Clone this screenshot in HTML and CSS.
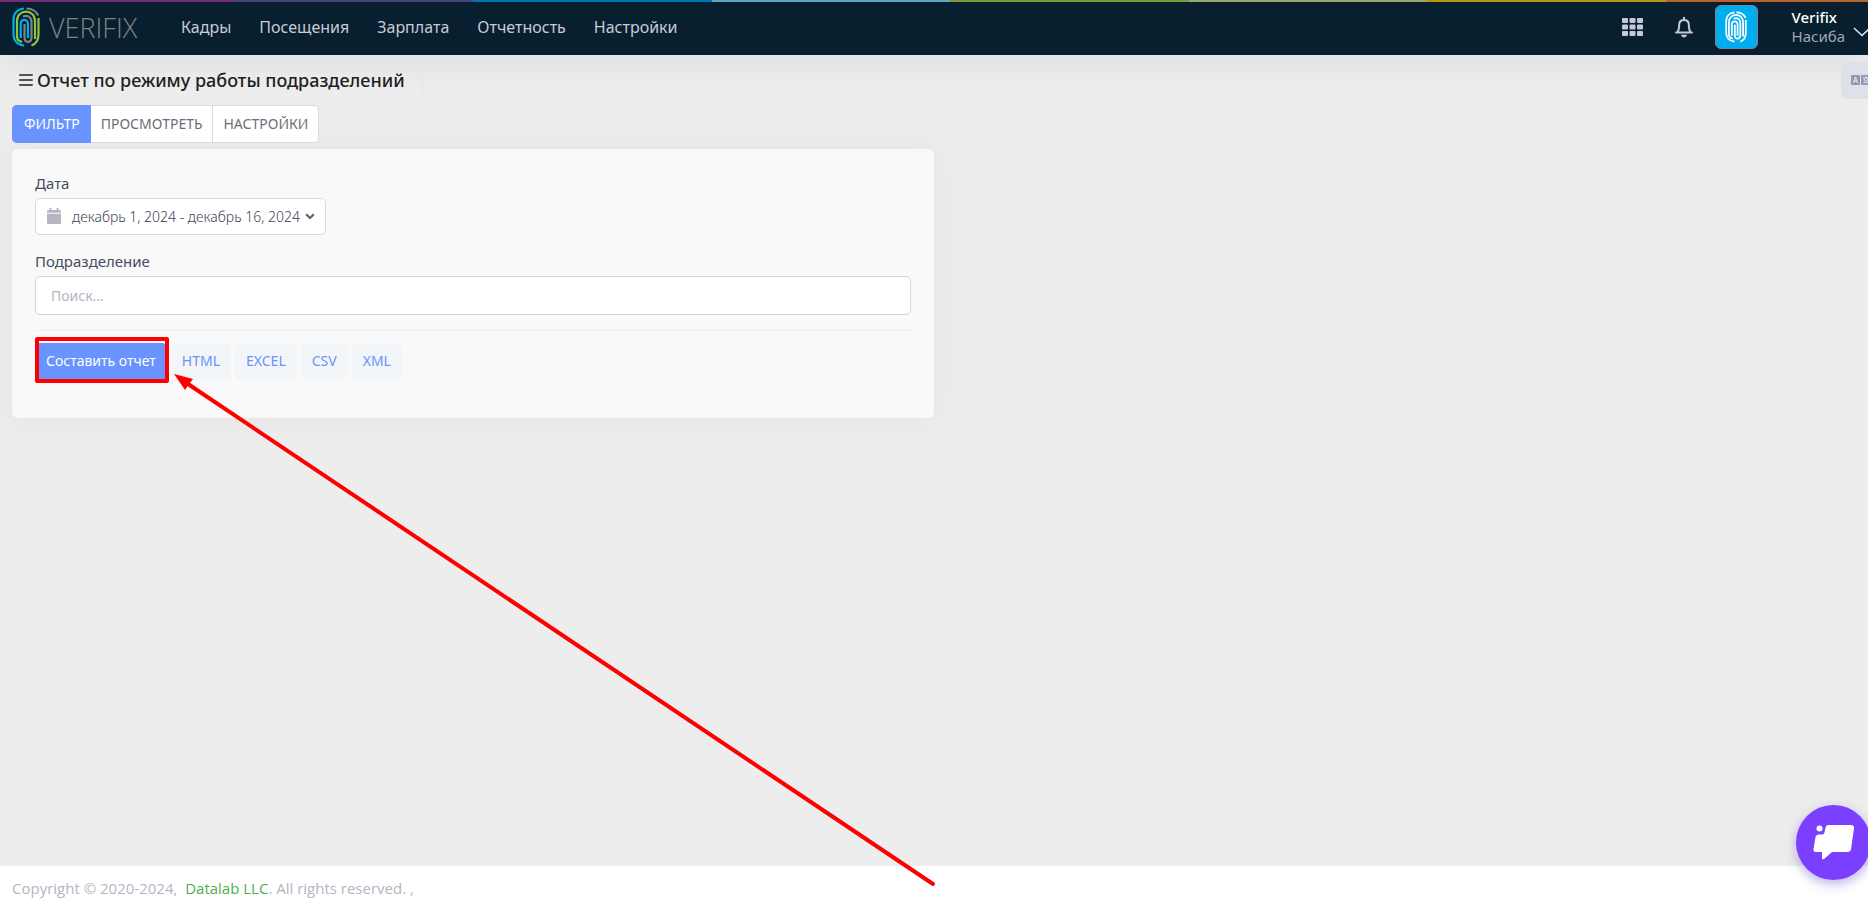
FILE: index.html
```html
<!DOCTYPE html>
<html lang="ru">
<head>
    <meta charset="UTF-8">
    <meta name="viewport" content="width=device-width, initial-scale=1.0">
    <title>Отчет по режиму работы подразделений</title>
    <link rel="stylesheet" href="styles.css">
</head>
<body>
    <!-- Logo shape shared by the header and the avatar -->
    <svg class="sprite" aria-hidden="true">
        <symbol id="finger" viewBox="0 0 28 40">
            <g fill="none" stroke-width="2.2">
                <path class="f-blue" d="M12 1.5C5 2 1.500 7 1.500 13V27C1.500 33 5 38 12 38.500"/>
                <path class="f-gray" d="M14.500 1.500C20 1.500 24 4 26.200 8.500"/>
                <path class="f-green" d="M5 31V14C5 1.500 23 1.500 23 14V32M26.500 11V27C26.500 33 24 37 19.500 38.500"/>
                <path class="f-green" d="M5 30C5.500 33 7.500 34.500 10 34.800"/>
                <path class="f-gray" d="M11 9.500C16 7.500 19.500 10.500 19.500 15V30C19.500 36.500 12.500 36.500 12.500 30V17"/>
                <path class="f-blue" d="M8.700 31V17C8.700 11.500 16 11.500 16 17V31"/>
            </g>
        </symbol>
    </svg>

    <header class="header">
        <div class="stripe">
            <i class="s1"></i><i class="s2"></i><i class="s3"></i><i class="s4"></i><i class="s5"></i><i class="s6"></i><i class="s7"></i><i class="s8"></i>
        </div>
        <div class="header-row">
            <a class="logo" href="#" aria-label="Verifix">
                <svg class="logo-mark"><use href="#finger"/></svg>
                <span class="logo-text">VERIFIX</span>
            </a>
            <nav class="menu">
                <a href="#">Кадры</a>
                <a href="#">Посещения</a>
                <a href="#">Зарплата</a>
                <a href="#">Отчетность</a>
                <a href="#">Настройки</a>
            </nav>
            <div class="topbar">
                <button class="icon-btn apps" aria-label="Apps">
                    <svg width="21" height="18" viewBox="0 0 21 18" fill="#c4c8d8">
                        <rect width="6" height="5" rx="1"/><rect x="7.500" width="6" height="5" rx="1"/><rect x="15" width="6" height="5" rx="1"/>
                        <rect y="6.500" width="6" height="5" rx="1"/><rect x="7.500" y="6.500" width="6" height="5" rx="1"/><rect x="15" y="6.500" width="6" height="5" rx="1"/>
                        <rect y="13" width="6" height="5" rx="1"/><rect x="7.500" y="13" width="6" height="5" rx="1"/><rect x="15" y="13" width="6" height="5" rx="1"/>
                    </svg>
                </button>
                <button class="icon-btn bell" aria-label="Notifications">
                    <svg width="18" height="21" viewBox="0 0 18 21">
                        <path d="M9 0.500V3M1 15.500H17M2.500 15C4.500 12.500 4 10 4.200 7.500C4.500 1.500 13.500 1.500 13.800 7.500C14 10 13.500 12.500 15.500 15" fill="none" stroke="#c4c8d8" stroke-width="2" stroke-linecap="round"/>
                        <path d="M6 17.800H12C11.500 21.500 6.500 21.500 6 17.800Z" fill="#c4c8d8"/>
                    </svg>
                </button>
                <button class="avatar" aria-label="Verifix">
                    <svg width="22" height="32"><use href="#finger"/></svg>
                </button>
                <div class="user">
                    <b>Verifix</b>
                    <span>Насиба</span>
                </div>
                <svg class="user-arrow" viewBox="0 0 18 10"><path d="M1 1L9 8.500L17 1" fill="none" stroke="#e4e6ef" stroke-width="1.500"/></svg>
            </div>
        </div>
    </header>

    <div class="subheader">
        <svg class="burger" viewBox="0 0 14 12"><path d="M1 1H13M1 6H13M1 11H13" stroke="#50514f" stroke-width="2" stroke-linecap="round"/></svg>
        <h1>Отчет по режиму работы подразделений</h1>
        <span class="separator"></span>
        <button class="lang-btn" aria-label="Language">
            <svg width="20" height="10" viewBox="0 0 20 10">
                <rect width="9" height="10" rx="1" fill="#9397b5"/><rect x="10" width="10" height="10" rx="1" fill="#9397b5"/>
                <path d="M2.500 8L4.500 2L6.500 8M3.200 6H5.800M12 3H18M15 1.500V3M13 4C14 6 16 7.500 17.500 8M17 4C16 6 14.500 7.500 12.500 8" fill="none" stroke="#f0f0f6"/>
            </svg>
        </button>
    </div>

    <main class="content">
        <div class="tabs">
            <button class="tab active">ФИЛЬТР</button>
            <button class="tab">ПРОСМОТРЕТЬ</button>
            <button class="tab">НАСТРОЙКИ</button>
        </div>

        <form class="card">
            <label for="date">Дата</label>
            <button class="date-btn" id="date" type="button">
                <svg width="14" height="16" viewBox="0 0 14 16" fill="#b5b5c3">
                    <path d="M2.500 0H4.500V2H9.500V0H11.500V2H12.500Q14 2 14 3.500V4.800H0V3.500Q0 2 1.500 2H2.500ZM0 5.800H14V14.500Q14 16 12.500 16H1.500Q0 16 0 14.500Z"/>
                </svg>
                <span>декабрь 1, 2024 - декабрь 16, 2024</span>
                <svg width="10" height="7" viewBox="0 0 10 7"><path d="M1.200 1.200L5 5L8.800 1.200" fill="none" stroke="#5e6278" stroke-width="2.200"/></svg>
            </button>

            <label for="division">Подразделение</label>
            <input class="search" id="division" type="text" placeholder="Поиск...">

            <div class="actions">
                <div class="marked">
                    <button class="btn primary" type="button">Составить отчет</button>
                    <svg class="arrow" viewBox="0 0 764 516">
                        <path d="M14 10L759 510" stroke="#f00" stroke-width="4" stroke-linecap="round"/>
                        <path d="M0 0L19 5L15 10L11 16Z" fill="#f00"/>
                    </svg>
                </div>
                <button class="btn" type="button">HTML</button>
                <button class="btn" type="button">EXCEL</button>
                <button class="btn" type="button">CSV</button>
                <button class="btn" type="button">XML</button>
            </div>
        </form>
    </main>

    <footer class="footer">Copyright © 2020-2024,&nbsp; <a href="#">Datalab LLC</a>. All rights reserved. ,</footer>

    <button class="chat" aria-label="Chat">
        <svg width="42" height="36" viewBox="0 0 42 36" fill="#fff">
            <circle cx="6.500" cy="3.500" r="3"/>
            <path d="M15 0H38Q41.500 0 41 3.500L38 24Q37.500 27 34.500 27H19L11 34Q9 35 9 33V27H3Q0 27 0.500 24L2.500 12Q3 9.500 5.500 9.500H9Q11 9.500 11.500 7.500L12.500 2.500Q13 0 15 0Z"/>
        </svg>
    </button>
</body>
</html>
```
FILE: styles.css
```css
* {
    margin: 0;
    padding: 0;
    box-sizing: border-box;
    font-family: 'Noto Sans', 'Open Sans', sans-serif;
}

body {
    display: flex;
    flex-direction: column;
    min-height: 100vh;
    background: #ededed;
    color: #464e5f;
    font-size: 15px;
    overflow-x: hidden;
}

a {
    text-decoration: none;
}

button {
    border: none;
    background: none;
    cursor: pointer;
}

svg {
    display: block;
    flex-shrink: 0;
}

.sprite {
    position: absolute;
    width: 0;
    height: 0;
}

/* Header */
.header {
    height: 55px;
    background: #071f2e;
    box-shadow: 0 10px 30px rgba(82, 63, 105, 0.08);
}

.stripe {
    display: flex;
    height: 2px;
    margin: 0 -36px 0 -4px;
}

.stripe i {
    flex: 1;
}

.s1 { background: #762879; }
.s2 { background: #46447c; }
.s3 { background: #0076b0; }
.s4 { background: #64a5c0; }
.s5 { background: #789b3a; }
.s6 { background: #92a870; }
.s7 { background: #b8960f; }
.s8 { background: #b9622f; }

.header-row {
    display: flex;
    align-items: center;
    height: 50px;
    padding-left: 12px;
    overflow: hidden;
}

.logo {
    display: flex;
    align-items: center;
    gap: 9px;
    width: 169px;
}

.logo-mark {
    width: 28px;
    height: 40px;
}

.f-blue { stroke: var(--line, #00aeef); }
.f-green { stroke: var(--line, #8cc63f); }
.f-gray { stroke: var(--line, #808285); }

.logo-text {
    color: #808285;
    font-family: 'Open Sans', sans-serif;
    font-size: 27px;
    font-weight: 300;
}

.menu {
    display: flex;
    gap: 28px;
}

.menu a {
    color: #c8cad8;
    font-size: 16px;
}

.topbar {
    display: flex;
    align-items: center;
    margin-left: auto;
}

.apps {
    margin-right: 32px;
}

.bell {
    margin-right: 22px;
}

.avatar {
    display: flex;
    align-items: center;
    justify-content: center;
    width: 43px;
    height: 44px;
    margin-right: 34px;
    background: #00aeef;
    border: 1px solid #7e8299;
    border-radius: 6px;
}

.avatar svg {
    --line: #fff;
}

.user {
    display: flex;
    flex-direction: column;
    color: #a2a5b9;
    font-size: 15px;
    line-height: 19px;
}

.user b {
    color: #fff;
    font-weight: 500;
}

.user-arrow {
    width: 18px;
    height: 10px;
    margin: 10px -3px 0 8px;
}

/* Subheader */
.subheader {
    display: flex;
    align-items: center;
    height: 50px;
    padding-left: 19px;
}

.burger {
    width: 14px;
    height: 12px;
    margin-right: 4px;
}

h1 {
    color: #212121;
    font-size: 18px;
    font-weight: 500;
}

.separator {
    width: 1px;
    height: 28px;
    margin-left: 17px;
    background: #e4e6ef;
}

.lang-btn {
    width: 27px;
    height: 37px;
    margin-left: auto;
    padding-left: 10px;
    background: #dfe0ea;
    border-radius: 5px 0 0 5px;
    overflow: hidden;
}

/* Content */
.content {
    flex: 1;
    padding: 0 12px;
}

.tabs {
    display: flex;
    margin-bottom: 6px;
}

.tab {
    height: 38px;
    padding: 0 10px 1px;
    background: #fff;
    border: 1px solid #d6dae2;
    border-left: none;
    color: #6c6e78;
    font-size: 14px;
}

.tab.active {
    padding-left: 12px;
    background: #6993ff;
    border-color: #6993ff;
    border-radius: 5px 0 0 5px;
    color: #fff;
}

.tab:last-child {
    border-radius: 0 5px 5px 0;
}

.card {
    display: flex;
    flex-direction: column;
    align-items: flex-start;
    width: 50%;
    padding: 23px 23px 38px;
    background: #f9f9f9;
    border-radius: 6px;
    box-shadow: 0 0 30px rgba(82, 63, 105, 0.05);
}

.card label {
    margin-bottom: 4px;
    font-size: 15px;
    line-height: 22px;
}

.date-btn {
    display: flex;
    align-items: center;
    height: 37px;
    padding: 0 10px 1px 11px;
    margin-bottom: 15px;
    background: #fff;
    border: 1px solid #d6dae2;
    border-radius: 5px;
    color: #3f4254;
    font-size: 14px;
    font-weight: 300;
}

.date-btn span {
    margin: 0 5px 0 11px;
}

.search {
    width: 100%;
    height: 39px;
    padding: 0 15px;
    background: #fff;
    border: 1px solid #d1d5dd;
    border-radius: 5px;
    font-size: 14px;
}

.search::placeholder {
    color: #b5b5c3;
}

.actions {
    display: flex;
    gap: 4px;
    width: 100%;
    margin-top: 15px;
    padding-top: 12px;
    border-top: 1px solid #ebedf0;
}

.btn {
    height: 37px;
    padding: 0 11px 2px;
    background: #f3f6f9;
    border-radius: 5px;
    color: #6993ff;
    font-size: 14px;
}

.btn.primary {
    background: #6993ff;
    color: #fff;
}

/* Red frame and pointer around the report button */
.marked {
    position: relative;
}

.marked::after {
    content: "";
    position: absolute;
    inset: -6px -2px -3px 0;
    border: 4px solid #f00;
    border-radius: 2px;
}

.arrow {
    position: absolute;
    top: 31px;
    left: 139px;
    width: 764px;
    height: 516px;
    z-index: 2;
    pointer-events: none;
}

/* Footer */
.footer {
    height: 40px;
    padding: 11px 12px;
    background: #fff;
    color: #b5b5c3;
    font-family: 'Open Sans', sans-serif;
    font-size: 15px;
    line-height: 22px;
}

.footer a {
    color: #4caf50;
    font-family: inherit;
}

/* Chat */
.chat {
    position: fixed;
    right: -3px;
    bottom: 26px;
    display: flex;
    align-items: center;
    justify-content: center;
    width: 75px;
    height: 75px;
    background: #7b3fff;
    border-radius: 50%;
    box-shadow: 0 4px 12px rgba(90, 60, 200, 0.4);
}
```
